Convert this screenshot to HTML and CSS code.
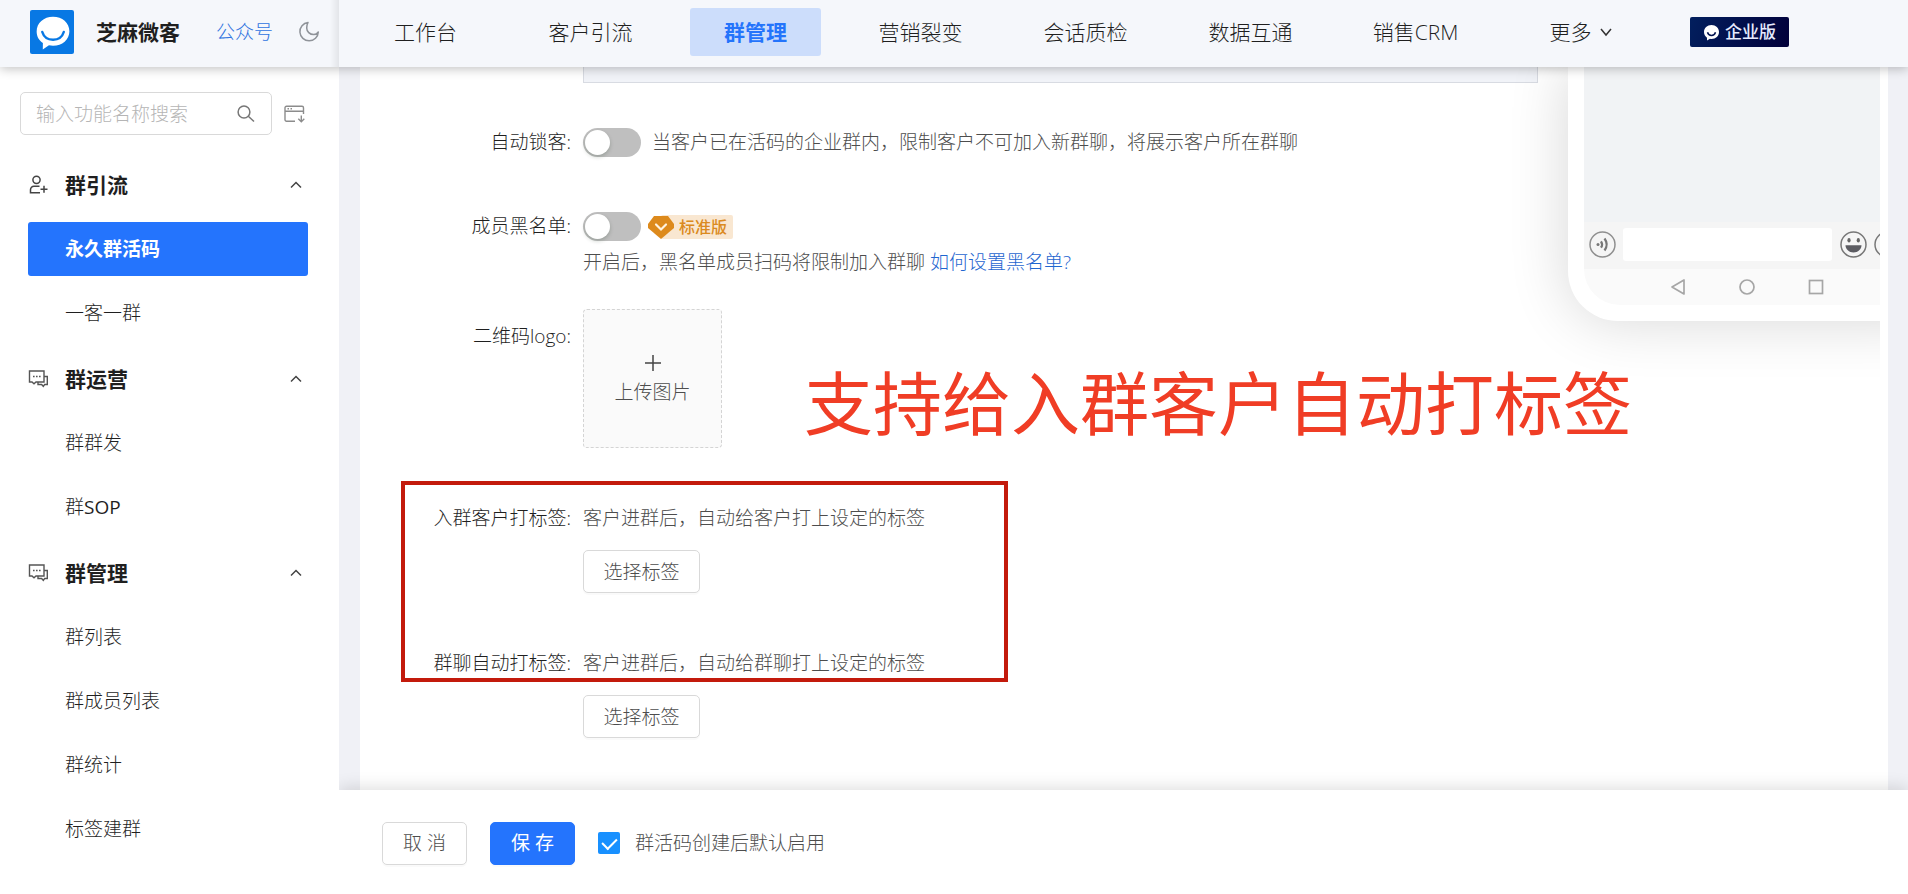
FILE: index.html
```html
<!DOCTYPE html>
<html lang="zh-CN">
<head>
<meta charset="utf-8">
<title>芝麻微客</title>
<link rel="stylesheet" href="styles.css">
</head>
<body>
<div class="app">
  <header class="header">
    <div class="brand">
      <svg class="brand-logo" viewBox="0 0 43 43" aria-hidden="true"><rect width="43" height="43" rx="2" fill="#0878e4"/><path d="M22.500 6.500C13.500 6.500 6.500 12.500 6.500 21c0 5 2.300 8.700 6.100 11.200L12.500 38.500l6-4c1.300.3 2.700.4 4 .4C31.500 34.900 38.500 29 38.500 20.700S31.500 6.500 22.500 6.500z" fill="#fff"/><path d="M12 21.500c1.500 5 5.500 7.500 10.500 7.500s9-2.500 10.500-7.500" fill="none" stroke="#0878e4" stroke-width="2.400" stroke-linecap="round"/></svg>
      <strong class="brand-name">芝麻微客</strong>
      <a class="brand-link" href="#">公众号</a>
      <button class="icon-button" type="button" aria-label="夜间模式"><svg width="22" height="22" viewBox="0 0 22 22" fill="none" stroke="#8f9399" stroke-width="1.500" stroke-linejoin="round"><path d="M10 1.500A9.200 9.200 0 1 0 20.300 11c-1 1.600-2.700 2.600-4.600 2.600-3.900 0-7-3.100-7-6.700 0-2.100.5-3.900 1.300-5.400z"/></svg></button>
    </div>
    <nav class="nav">
      <a class="nav-item" href="#">工作台</a>
      <a class="nav-item" href="#">客户引流</a>
      <a class="nav-item nav-item-active" href="#">群管理</a>
      <a class="nav-item" href="#">营销裂变</a>
      <a class="nav-item" href="#">会话质检</a>
      <a class="nav-item" href="#">数据互通</a>
      <a class="nav-item" href="#">销售CRM</a>
      <a class="nav-item" href="#">更多<svg width="12" height="12" viewBox="0 0 12 12" fill="none" stroke="#333" stroke-width="1.500"><path d="M1 3l5 6 5-6"/></svg></a>
      <span class="edition"><svg width="17" height="17" viewBox="0 0 17 17"><path d="M8.500 1C4.200 1 1 4 1 8c0 2.400 1.200 4.400 3 5.700L4 16.500l3-1.700c.5.100 1 .2 1.500.2C12.800 15 16 12 16 8s-3.200-7-7.500-7z" fill="#fff"/><path d="M4.500 8.200c.7 2.300 2.300 3.300 4 3.300s3.300-1 4-3.300" fill="none" stroke="#02134f" stroke-width="1.500"/></svg>企业版</span>
    </nav>
  </header>

  <div class="body">
    <aside class="sidebar">
      <form class="search">
        <div class="search-box">
          <input class="search-input" type="text" placeholder="输入功能名称搜索" aria-label="输入功能名称搜索">
          <button class="icon-button" type="button" aria-label="搜索"><svg width="18" height="18" viewBox="0 0 18 18" fill="none" stroke="#777" stroke-width="1.500"><circle cx="7" cy="7" r="5.900"/><path d="M11.300 11.300l5.700 5.200"/></svg></button>
        </div>
        <button class="icon-button" type="button" aria-label="收起菜单"><svg width="21" height="18" viewBox="0 0 21 18" fill="none" stroke="#8c8c8c" stroke-width="1.400"><path d="M11 16.300H2.500A1.500 1.500 0 0 1 1 14.800v-12A1.500 1.500 0 0 1 2.500 1.300h15.500a1.500 1.500 0 0 1 1.500 1.500V9M1 6.300h18.500M3.500 3.800h1.500M6.500 3.800h1.500M17.300 10.500v6M14.300 13.800l3 2.900 3-2.900"/></svg></button>
      </form>

      <nav class="menu">
        <section class="menu-group">
          <button class="menu-title" type="button">
            <svg width="20" height="20" viewBox="0 0 20 20" fill="none" stroke="#444" stroke-width="1.500"><circle cx="8.500" cy="4.800" r="3.600"/><path d="M11.500 11.200H6A3.500 3.500 0 0 0 2.500 14.800v2.900h9.500M16 10.800v7M12.500 14.300h7"/></svg>
            <span>群引流</span>
            <svg class="menu-arrow" width="12" height="8" viewBox="0 0 12 8" fill="none" stroke="#444" stroke-width="1.500"><path d="M1 6.500l5-5 5 5"/></svg>
          </button>
          <a class="menu-item menu-item-active" href="#">永久群活码</a>
          <a class="menu-item" href="#">一客一群</a>
        </section>
        <section class="menu-group">
          <button class="menu-title" type="button">
            <svg width="20" height="18" viewBox="0 0 20 18" fill="none" stroke="#555" stroke-width="1.400"><path d="M1.500 1H16v11H8l-2 1.800L4 12H1.500zM16 6.500h3.300v8h-2.700L15.300 16.300l-1.700-1.800H10V12M5 6.500h1.600M8 6.500h1.600M11 6.500h1.600"/></svg>
            <span>群运营</span>
            <svg class="menu-arrow" width="12" height="8" viewBox="0 0 12 8" fill="none" stroke="#444" stroke-width="1.500"><path d="M1 6.500l5-5 5 5"/></svg>
          </button>
          <a class="menu-item" href="#">群群发</a>
          <a class="menu-item" href="#">群<span class="latin">SOP</span></a>
        </section>
        <section class="menu-group">
          <button class="menu-title" type="button">
            <svg width="20" height="18" viewBox="0 0 20 18" fill="none" stroke="#555" stroke-width="1.400"><path d="M1.500 1H16v11H8l-2 1.800L4 12H1.500zM16 6.500h3.300v8h-2.700L15.300 16.300l-1.700-1.800H10V12M5 6.500h1.600M8 6.500h1.600M11 6.500h1.600"/></svg>
            <span>群管理</span>
            <svg class="menu-arrow" width="12" height="8" viewBox="0 0 12 8" fill="none" stroke="#444" stroke-width="1.500"><path d="M1 6.500l5-5 5 5"/></svg>
          </button>
          <a class="menu-item" href="#">群列表</a>
          <a class="menu-item" href="#">群成员列表</a>
          <a class="menu-item" href="#">群统计</a>
          <a class="menu-item" href="#">标签建群</a>
        </section>
      </nav>
    </aside>

    <main class="main">
      <div class="card">
        <div class="card-content">
          <form class="form">
            <div class="panel"></div>
            <div class="row">
              <label class="label" for="lock">自动锁客:</label>
              <div class="line"><input class="switch" type="checkbox" role="switch" id="lock"><span class="switch-note">当客户已在活码的企业群内，限制客户不可加入新群聊，将展示客户所在群聊</span></div>
            </div>
            <div class="row row-tight">
              <label class="label" for="blacklist">成员黑名单:</label>
              <div class="field">
                <div class="line"><input class="switch" type="checkbox" role="switch" id="blacklist">
                  <span class="level"><svg width="26" height="24" viewBox="0 0 26 24"><path d="M6 1h14l6 8v4L13 24 0 13V9z" fill="#dd8a1c"/><path d="M8 9.500l5 5 5-5" fill="none" stroke="#fff3df" stroke-width="2.200" stroke-linecap="round"/></svg><span class="level-text">标准版</span></span>
                </div>
                <p class="help help-below">开启后，黑名单成员扫码将限制加入群聊 <a class="link" href="#">如何设置黑名单?</a></p>
              </div>
            </div>
            <div class="row">
              <label class="label label-upload" for="upload">二维码logo:</label>
              <button class="upload" type="button" id="upload"><svg width="16" height="16" viewBox="0 0 16 16" stroke="#444" stroke-width="1.500"><path d="M8 0v16M0 8h16"/></svg>上传图片</button>
            </div>
            <div class="row">
              <label class="label" for="customer-tag">入群客户打标签:</label>
              <div class="field">
                <p class="help">客户进群后，自动给客户打上设定的标签</p>
                <button class="button button-tag" type="button" id="customer-tag">选择标签</button>
              </div>
            </div>
            <div class="row">
              <label class="label" for="group-tag">群聊自动打标签:</label>
              <div class="field">
                <p class="help">客户进群后，自动给群聊打上设定的标签</p>
                <button class="button button-tag" type="button" id="group-tag">选择标签</button>
              </div>
            </div>
          </form>
          <div class="preview">
            <div class="phone">
              <div class="screen">
                <div class="chat"></div>
                <div class="chat-bar">
                  <svg width="27" height="27" viewBox="0 0 27 27" fill="none" stroke="#8f8f8f" stroke-width="1.500"><circle cx="13.500" cy="13.500" r="12.500"/><circle cx="9" cy="13.500" r="1.500" fill="#777" stroke="none"/><path d="M12 10.300c1.400 2 1.400 4.400 0 6.400M15.500 7.500c2.700 3.700 2.700 8.300 0 12" stroke="#777" stroke-width="2.200"/></svg>
                  <span class="chat-input"></span>
                  <svg width="27" height="27" viewBox="0 0 27 27"><circle cx="13.500" cy="13.500" r="12.500" fill="none" stroke="#777" stroke-width="1.500"/><ellipse cx="9" cy="9.300" rx="1.600" ry="2.200" fill="#666"/><ellipse cx="18.300" cy="9.300" rx="1.600" ry="2.200" fill="#666"/><path d="M5.500 14.300h16c0 4-3.500 7.200-8 7.200s-8-3.200-8-7.200z" fill="#5c5c62"/></svg>
                  <svg width="27" height="27" viewBox="0 0 27 27" fill="none" stroke="#777" stroke-width="1.500"><circle cx="13.500" cy="13.500" r="12.500"/><path d="M13.500 7v13M7 13.500h13"/></svg>
                </div>
                <div class="phone-keys">
                  <svg width="16" height="16" viewBox="0 0 16 16" fill="none" stroke="#a6a6a6" stroke-width="1.700" stroke-linejoin="round"><path d="M14 1v14L2 8z"/></svg>
                  <svg width="16" height="16" viewBox="0 0 16 16" fill="none" stroke="#a6a6a6" stroke-width="1.700"><circle cx="8" cy="8" r="7"/></svg>
                  <svg width="16" height="16" viewBox="0 0 16 16" fill="none" stroke="#a6a6a6" stroke-width="1.700"><rect x="1.500" y="1.500" width="13" height="13"/></svg>
                </div>
              </div>
            </div>
          </div>
        </div>
      </div>
      <div class="callout-frame"></div>
      <p class="callout-text">支持给入群客户自动打标签</p>
      <footer class="footer">
        <button class="button button-action" type="button">取 消</button>
        <button class="button button-action button-primary" type="button">保 存</button>
        <label class="check-label"><input class="check" type="checkbox" checked>群活码创建后默认启用</label>
      </footer>
    </main>
  </div>
</div>
</body>
</html>
```
FILE: styles.css
```css
* { box-sizing: border-box; }

body {
  margin: 0;
  color: #1f1f1f;
  background: #fff;
  font: 300 19px/28px "Open Sans", "Noto Sans CJK SC", sans-serif;
}

button, input { font: inherit; color: inherit; }
button { padding: 0; border: 0; background: none; cursor: pointer; }
a { color: inherit; text-decoration: none; }
p { margin: 0; }
svg { display: block; flex: none; }

.app { display: flex; flex-direction: column; height: 100vh; overflow: hidden; }

/* Header */
.header {
  position: relative;
  z-index: 2;
  display: flex;
  flex: none;
  height: 67px;
  background: #f5f7fb;
  box-shadow: 0 2px 10px rgba(0, 0, 0, .24);
}
.brand {
  display: flex;
  flex: none;
  align-items: center;
  width: 339px;
  padding: 0 19px 3px 30px;
  background: linear-gradient(to left, #e3e5e9, #f5f7fb 9px);
}
.brand-logo { width: 44px; height: 44px; }
.brand-name { margin-left: 22px; font-size: 21px; font-weight: 700; }
.brand-link { margin: 0 25px 0 auto; color: #2f74e0; }
.icon-button { flex: none; }
.nav { display: flex; flex: 1; align-items: center; gap: 34px; padding: 0 20px 3px 21px; }
.nav-item {
  display: flex;
  flex: none;
  align-items: center;
  justify-content: center;
  gap: 8px;
  width: 131px;
  height: 48px;
  border-radius: 3px;
  font-size: 21px;
}
.nav-item-active { background: #ccddfb; color: #2474fb; font-weight: 700; }
.edition {
  display: flex;
  flex: none;
  align-items: center;
  justify-content: center;
  gap: 5px;
  width: 99px;
  height: 30px;
  margin-left: 10px;
  border-radius: 2px;
  background: linear-gradient(110deg, #021f5e, #02003a);
  color: #e6ebff;
  font-size: 17px;
  font-weight: 500;
}

.body { display: flex; flex: 1; min-height: 0; }

/* Sidebar */
.sidebar { flex: none; width: 339px; padding-top: 25px; }
.search { display: flex; align-items: center; gap: 12px; padding: 0 34px 0 20px; }
.search-box {
  display: flex;
  flex: 1;
  align-items: center;
  min-width: 0;
  height: 43px;
  padding: 0 16px 0 15px;
  border: 1px solid #d9d9d9;
  border-radius: 5px;
}
.search-input { flex: 1; min-width: 0; padding: 0; border: 0; outline: 0; background: none; }
.search-input::placeholder { color: #b5b5b5; }
.menu {
  display: flex;
  flex-direction: column;
  gap: 2px;
  margin-top: 18px;
  padding: 0 31px 0 28px;
}
.menu-title {
  display: flex;
  align-items: center;
  width: 100%;
  height: 64px;
  padding-right: 6px;
  font-size: 21px;
  font-weight: 700;
}
.menu-title span { margin-left: 17px; }
.menu-arrow { margin-left: auto; }
.menu-item {
  display: block;
  height: 54px;
  margin: 5px 0 10px;
  padding-left: 37px;
  border-radius: 3px;
  line-height: 54px;
}
.menu-item:last-child { margin-bottom: 5px; }
.menu-item-active { background: #2474fd; color: #fff; font-weight: 700; }
.latin { font-weight: 400; }

/* Page */
.main {
  position: relative;
  display: flex;
  flex: 1;
  flex-direction: column;
  min-width: 0;
  background: #f0f1f6;
}
.card {
  flex: 1;
  min-height: 0;
  margin: 0 20px 0 21px;
  padding-right: 8px;
  background: #fff;
}
.card-content { display: flex; height: 100%; overflow: hidden; }

/* Form */
.form { flex: 1; min-width: 0; }
.panel {
  height: 16px;
  margin: 0 0 45px 223px;
  border: 1px solid #d8dbe2;
  border-top: 0;
  background: #f1f3f8;
}
.row { display: grid; grid-template-columns: 211px 1fr; column-gap: 12px; margin-bottom: 56px; }
.row-tight { margin-bottom: 33px; }
.label { text-align: right; }
.label-upload { padding-top: 13px; }
.line { display: flex; align-items: center; height: 28px; }
.switch {
  flex: none;
  width: 58px;
  height: 29px;
  margin: 0;
  padding: 2px;
  border-radius: 15px;
  background: #bfbfbf;
  appearance: none;
}
.switch::before {
  display: block;
  width: 25px;
  height: 25px;
  border-radius: 50%;
  background: #fff;
  box-shadow: 0 2px 4px rgba(0, 35, 11, .2);
  content: "";
}
.switch-note { margin-left: 11px; color: #4d4d4d; white-space: nowrap; }
.level { display: flex; align-items: center; margin: 2px 0 0 7px; }
.level-text {
  width: 72px;
  height: 24px;
  margin-left: -13px;
  padding-left: 18px;
  border-radius: 2px;
  background: #f9e7d1;
  color: #db8a20;
  font-size: 16px;
  font-weight: 500;
  line-height: 24px;
}
.level svg { position: relative; z-index: 1; }
.help { color: #4d4d4d; }
.help-below { margin-top: 8px; }
.link { color: #1f66d0; }
.upload {
  display: flex;
  flex-direction: column;
  align-items: center;
  justify-content: center;
  gap: 7px;
  width: 139px;
  height: 139px;
  padding-top: 4px;
  border: 1px dashed #d4d4d4;
  border-radius: 4px;
  background: #fafafa;
  color: #4d4d4d;
}
.button {
  height: 43px;
  border: 1px solid #d9d9d9;
  border-radius: 5px;
  background: #fff;
  box-shadow: 0 2px 0 rgba(0, 0, 0, .02);
  color: #4d4d4d;
}
.button-tag { display: block; width: 117px; margin-top: 18px; }

/* Phone preview, cut off at the right edge of the card */
.preview { flex: none; width: 312px; margin-left: 30px; }
.phone {
  width: 390px;
  padding: 0 16px 16px;
  border-radius: 0 0 50px 50px;
  background: #fff;
  box-shadow: 0 0 60px rgba(0, 0, 0, .16);
}
.screen { overflow: hidden; border-radius: 0 0 36px 36px; background: #fafafa; }
.chat { height: 155px; background: #f1f3f5; }
.chat-bar { display: flex; align-items: center; gap: 7px; height: 47px; padding: 0 5px 2px; background: #f5f5f5; }
.chat-input { flex: none; width: 209px; height: 33px; margin-right: 1px; border-radius: 3px; background: #fff; }
.phone-keys { display: flex; align-items: center; gap: 53px; height: 36px; padding-left: 86px; }

/* Annotations drawn over the page */
.callout-frame {
  position: absolute;
  top: 414px;
  left: 62px;
  width: 607px;
  height: 201px;
  border: 4px solid #c31a0c;
  pointer-events: none;
}
.callout-text {
  position: absolute;
  top: 296px;
  left: 465px;
  color: #f03d25;
  font-size: 69px;
  font-weight: 400;
  line-height: 80px;
  white-space: nowrap;
}

/* Footer */
.footer {
  position: relative;
  display: flex;
  flex: none;
  align-items: center;
  height: 104px;
  padding: 2px 43px 0;
  background: #fff;
  box-shadow: 0 -2px 16px rgba(0, 0, 0, .14);
  clip-path: inset(-30px 0 0 0);
}
.button-action { width: 85px; margin-right: 23px; }
.button-primary { border-color: #2474fd; background: #2474fd; color: #fff; font-weight: 400; }
.check-label { display: flex; align-items: center; gap: 15px; color: #4d4d4d; }
.check {
  display: grid;
  place-items: center;
  width: 22px;
  height: 22px;
  margin: 0;
  border-radius: 2px;
  background: #1890ff;
  appearance: none;
}
.check::before {
  width: 7px;
  height: 12px;
  margin-bottom: 3px;
  border: solid #fff;
  border-width: 0 2px 2px 0;
  rotate: 45deg;
  content: "";
}
```
